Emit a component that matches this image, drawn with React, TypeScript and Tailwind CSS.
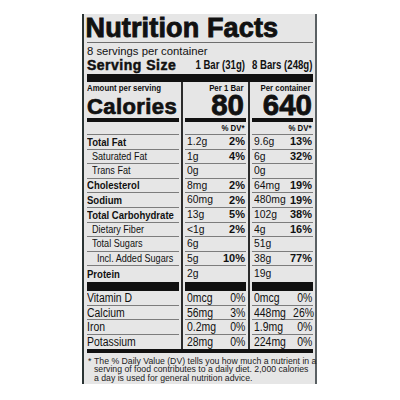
import React from 'react';

type Nutrient = {
  name: string;
  level: 0 | 1 | 2;
  bar: string;
  barDv?: string;
  box: string;
  boxDv?: string;
};

const NUTRIENTS: Nutrient[] = [
  { name: 'Total Fat', level: 0, bar: '1.2g', barDv: '2%', box: '9.6g', boxDv: '13%' },
  { name: 'Saturated Fat', level: 1, bar: '1g', barDv: '4%', box: '6g', boxDv: '32%' },
  { name: 'Trans Fat', level: 1, bar: '0g', box: '0g' },
  { name: 'Cholesterol', level: 0, bar: '8mg', barDv: '2%', box: '64mg', boxDv: '19%' },
  { name: 'Sodium', level: 0, bar: '60mg', barDv: '2%', box: '480mg', boxDv: '19%' },
  { name: 'Total Carbohydrate', level: 0, bar: '13g', barDv: '5%', box: '102g', boxDv: '38%' },
  { name: 'Dietary Fiber', level: 1, bar: '<1g', barDv: '2%', box: '4g', boxDv: '16%' },
  { name: 'Total Sugars', level: 1, bar: '6g', box: '51g' },
  { name: 'Incl. Added Sugars', level: 2, bar: '5g', barDv: '10%', box: '38g', boxDv: '77%' },
];

const MINERALS = [
  ['Vitamin D', '0mcg', '0%', '0mcg', '0%'],
  ['Calcium', '56mg', '3%', '448mg', '26%'],
  ['Iron', '0.2mg', '0%', '1.9mg', '0%'],
  ['Potassium', '28mg', '0%', '224mg', '0%'],
];

const COLS = 'grid grid-cols-[92px_6px_61px_6px_61px]';

const Sep = () => (
  <div className="flex justify-center">
    <div className="w-[2px] bg-[#2c2c2c]" />
  </div>
);

const Small = ({ children, right }: { children: React.ReactNode; right?: boolean }) => (
  <span
    className={`inline-block whitespace-nowrap text-[9px] font-bold leading-[10px] scale-x-[0.87] ${right ? 'origin-right' : 'origin-left'}`}
  >
    {children}
  </span>
);

function Amount({ value, dv, line = true }: { value: string; dv?: string; line?: boolean }) {
  return (
    <div
      className={`flex items-center justify-between pl-[1.5px] pr-[1px] ${line ? 'border-b border-[#7c7c7c]' : ''}`}
    >
      <span className="inline-block origin-left scale-x-[0.9] whitespace-nowrap text-[11.5px] leading-none">{value}</span>
      {dv && <span className="whitespace-nowrap text-[11px] font-bold leading-none">{dv}</span>}
    </div>
  );
}

function NutrientRow({ n }: { n: Nutrient }) {
  const indent = n.level === 0 ? 'pl-0' : n.level === 1 ? 'pl-[4.5px]' : 'pl-[10px]';
  return (
    <div className={`${COLS} h-[14.6px]`}>
      <div className={`flex items-center border-b border-[#7c7c7c] ${indent}`}>
        {n.level === 0 ? (
          <span className="inline-block origin-left scale-x-[0.91] whitespace-nowrap text-[10.5px] font-bold leading-none">
            {n.name}
          </span>
        ) : (
          <span className="inline-block origin-left scale-x-[0.79] whitespace-nowrap text-[11.5px] leading-none">
            {n.name}
          </span>
        )}
      </div>
      <Sep />
      <Amount value={n.bar} dv={n.barDv} />
      <Sep />
      <Amount value={n.box} dv={n.boxDv} />
    </div>
  );
}

function MineralRow({ m, last }: { m: string[]; last: boolean }) {
  const line = last ? '' : 'border-b border-[#7c7c7c]';
  const cell = `flex items-center justify-between pl-[1.5px] pr-[1px] ${line}`;
  const txt = 'inline-block whitespace-nowrap text-[12px] leading-none scale-x-[0.87]';
  return (
    <div className={`${COLS} h-[14.4px]`}>
      <div className={`flex items-center ${line}`}>
        <span className={`${txt} origin-left`}>{m[0]}</span>
      </div>
      <Sep />
      <div className={cell}>
        <span className={`${txt} origin-left`}>{m[1]}</span>
        <span className={`${txt} origin-right`}>{m[2]}</span>
      </div>
      <Sep />
      <div className={cell}>
        <span className={`${txt} origin-left`}>{m[3]}</span>
        <span className={`${txt} origin-right`}>{m[4]}</span>
      </div>
    </div>
  );
}

export default function App() {
  return (
    <div className="h-[400px] w-[400px] bg-white pl-[82px] pt-[14px] font-['Liberation_Sans',Arial,sans-serif] text-[#111]">
      <div className="w-[235px] border-l-2 border-r-2 border-l-[#2a3434] border-r-[#5a6063] bg-[#e6e6e6] pl-[3px] pr-[2px] pt-px">
        <div className="-ml-[1.5px] h-[27px] whitespace-nowrap text-[27px] font-bold leading-[27px] tracking-[0.15px] [-webkit-text-stroke:0.9px_#111]">
          Nutrition Facts
        </div>
        <div className="h-px bg-[#6e6e6e]" />
        <div className="h-[15px] whitespace-nowrap text-[11.3px] leading-[16px]">8 servings per container</div>

        <div className={`${COLS} h-[16px]`}>
          <div className="whitespace-nowrap text-[14px] font-bold leading-[14px] tracking-[0.5px] [-webkit-text-stroke:0.5px_#111]">
            Serving Size
          </div>
          <div />
          <div className="flex justify-end pr-px">
            <span className="inline-block origin-right scale-x-[0.8] whitespace-nowrap text-[12px] font-bold leading-[14px]">
              1 Bar (31g)
            </span>
          </div>
          <div />
          <div className="flex justify-end pr-px">
            <span className="inline-block origin-right scale-x-[0.8] whitespace-nowrap text-[12px] font-bold leading-[14px]">
              8 Bars (248g)
            </span>
          </div>
        </div>

        <div className="h-[8px] bg-[#111]" />

        <div className={`${COLS} h-[11px]`}>
          <div className="flex items-end">
            <Small>Amount per serving</Small>
          </div>
          <Sep />
          <div className="flex items-end justify-end pr-[2px]">
            <Small right>Per 1 Bar</Small>
          </div>
          <Sep />
          <div className="flex items-end justify-end pr-[2px]">
            <Small right>Per container</Small>
          </div>
        </div>

        <div className={`${COLS} h-[29px]`}>
          <div className="flex items-end border-b-4 border-[#111]">
            <span className="whitespace-nowrap text-[22px] font-bold leading-[22px] tracking-[0.4px] [-webkit-text-stroke:0.7px_#111]">
              Calories
            </span>
          </div>
          <Sep />
          <div className="flex items-end justify-end border-b-4 border-[#111] pb-[2px] pr-[2px]">
            <span className="text-[29.5px] font-bold leading-[22px] [-webkit-text-stroke:0.8px_#111]">80</span>
          </div>
          <Sep />
          <div className="flex items-end justify-end border-b-4 border-[#111] pb-[2px] pr-px">
            <span className="text-[29.5px] font-bold leading-[22px] [-webkit-text-stroke:0.8px_#111]">640</span>
          </div>
        </div>

        <div className={`${COLS} h-[13px]`}>
          <div className="border-b border-[#7c7c7c]" />
          <Sep />
          <div className="flex items-center justify-end border-b border-[#7c7c7c] pr-px">
            <Small right>% DV*</Small>
          </div>
          <Sep />
          <div className="flex items-center justify-end border-b border-[#7c7c7c] pr-px">
            <Small right>% DV*</Small>
          </div>
        </div>

        {NUTRIENTS.map((n) => (
          <NutrientRow key={n.name} n={n} />
        ))}

        <div className={`${COLS} h-[15.6px]`}>
          <div className="flex items-center">
            <span className="inline-block origin-left scale-x-[0.91] whitespace-nowrap text-[10.5px] font-bold leading-none">
              Protein
            </span>
          </div>
          <Sep />
          <Amount value="2g" line={false} />
          <Sep />
          <Amount value="19g" line={false} />
        </div>

        <div className={`${COLS} h-[9.5px]`}>
          <div className="bg-[#111]" />
          <Sep />
          <div className="bg-[#111]" />
          <Sep />
          <div className="bg-[#111]" />
        </div>

        {MINERALS.map((m, i) => (
          <MineralRow key={m[0]} m={m} last={i === MINERALS.length - 1} />
        ))}

        <div className="h-[4px] bg-[#111]" />

        <div className="flex h-[31px] pl-px pt-[3.5px] text-[8.7px] leading-[8.5px] text-[#222]">
          <span className="w-[6px] shrink-0">*</span>
          <div className="whitespace-nowrap">
            The % Daily Value (DV) tells you how much a nutrient in a
            <br />
            serving of food contributes to a daily diet. 2,000 calories
            <br />
            a day is used for general nutrition advice.
          </div>
        </div>
      </div>
    </div>
  );
}
